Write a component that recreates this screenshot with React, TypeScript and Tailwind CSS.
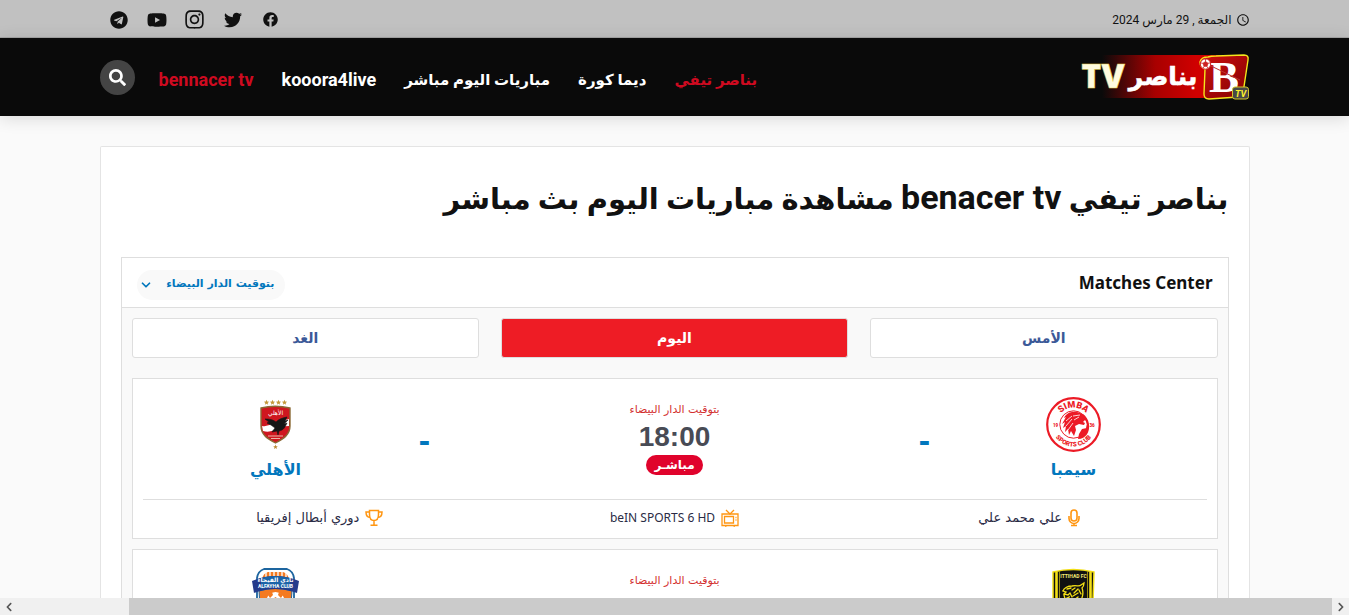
import React from "react";
import { FaFacebook, FaInstagram, FaSearch, FaTelegram, FaTwitter, FaYoutube, FaChevronLeft, FaChevronRight } from "react-icons/fa";
import { MdAccessTime } from "react-icons/md";
import { FiChevronDown } from "react-icons/fi";

const STAR = "M0-5 1.3-1.7 4.8-1.5 2.1.7 3 4.1 0 2.2-3 4.1-2.1.7-4.8-1.5-1.3-1.7Z";

function SiteLogo() {
  return (
    <svg viewBox="0 0 170 50" className="h-[50px] w-[170px]" direction="ltr" role="img" aria-label="بناصر TV">
      <defs>
        <linearGradient id="band" x1="0" x2="1">
          <stop offset="0" stopColor="#0a0a0a" />
          <stop offset="0.45" stopColor="#a80000" />
          <stop offset="0.8" stopColor="#d00000" />
        </linearGradient>
        <linearGradient id="tile" x1="0" x2="1" y1="0" y2="1">
          <stop offset="0" stopColor="#d01010" />
          <stop offset="1" stopColor="#800000" />
        </linearGradient>
      </defs>
      <rect x="22" y="3" width="118" height="43" fill="url(#band)" />
      <text x="23" y="36" textAnchor="middle" fontFamily="'Open Sans', sans-serif" fontWeight="800" fontSize="34" fill="#fffbe0" stroke="#e8d44a" strokeWidth="0.5">TV</text>
      <text x="83" y="33" textAnchor="middle" fontFamily="'DejaVu Sans', sans-serif" fontWeight="700" fontSize="25" fill="#fff" stroke="#fff" strokeWidth="0.6">بناصر</text>
      <path d="M128 5q3-1 8-1l28-1q5 0 4 5l-5 33q-1 4-5 4l-29 2q-5 0-5-5l1-25q-5-2-5-7 1-5 8-5Z" fill="url(#tile)" stroke="#f4e51c" strokeWidth="1.4" />
      <text x="144" y="40" textAnchor="middle" fontFamily="'Liberation Serif', serif" fontWeight="700" fontSize="45" fill="#fff">B</text>
      <path d="m129 13 31 15" stroke="#b33" strokeWidth="1" />
      <circle cx="125.500" cy="12" r="5.200" fill="#fff" stroke="#c22" strokeWidth="1" />
      <path d="m125.500 9.500 2.500 1.800-1 3h-3l-1-3ZM125.500 7v2.500M121 11l2 .3M128 11.300l2.500-.5M124 14.300l-1 2.200M127 14.300l1 2.200" fill="#c22" stroke="#c22" strokeWidth=".8" />
      <rect x="152.500" y="35" width="16" height="12" rx="2.500" fill="#484848" stroke="#d2c52a" strokeWidth="1" />
      <text x="160.500" y="44.500" textAnchor="middle" fontFamily="Roboto, sans-serif" fontStyle="italic" fontWeight="700" fontSize="9" fill="#fff22b">TV</text>
    </svg>
  );
}

function SimbaCrest() {
  return (
    <svg viewBox="0 0 55 55" className="h-[55px] w-[55px]" direction="ltr" aria-hidden="true">
      <defs>
        <path id="simba-top" d="M10.500 27.500a17 17 0 0 1 34 0" />
        <path id="simba-bottom" d="M5.500 27.500a22 22 0 0 0 44 0" />
      </defs>
      <circle cx="27.500" cy="27.500" r="26.300" fill="#fff" stroke="#ec1b26" strokeWidth="2.200" />
      <circle cx="27.500" cy="27.500" r="13.700" fill="#fff" stroke="#ec1b26" strokeWidth="1" />
      <path d="M36 17c-6-4-15-3-18 4l2-1-4 7 3-2-2 6 3-2-1 6 3-3 1 6 2-4 3 5 2-6-1-4 4-2 5 1 1-2-2-1 2-2 2 3v5l-5 1-3 5-1 5c8 0 12-7 11-15-1-5-3-8-6-10Z" fill="#ec1b26" />
      <path d="m20 24 6-5m-6 10 6-7m-4 11 5-7m0-7 7-1m-6 5 5-3" stroke="#fff" strokeWidth=".8" />
      <g fill="#ec1b26" fontFamily="Roboto, sans-serif" fontWeight="900">
        <text fontSize="9" textAnchor="middle"><textPath href="#simba-top" startOffset="50%">SIMBA</textPath></text>
        <text fontSize="6.300" textAnchor="middle"><textPath href="#simba-bottom" startOffset="50%">SPORTS CLUB</textPath></text>
        <text x="9.500" y="29.500" fontSize="4.500" textAnchor="middle">19</text>
        <text x="46" y="29.500" fontSize="4.500" textAnchor="middle">36</text>
      </g>
    </svg>
  );
}

function AhlyCrest() {
  return (
    <svg viewBox="0 0 55 55" className="h-[55px] w-[55px]" direction="ltr" aria-hidden="true">
      {[18.5, 24.5, 30.5, 36.5].map((x) => (
        <path key={x} d={STAR} transform={`translate(${x} 5.500) scale(.55)`} fill="#c4983a" />
      ))}
      <path d="M13 11q14-3.500 29 0v18c0 9-7 13-14.500 17C20 42 13 38 13 29Z" fill="#cf171f" stroke="#8a6a35" strokeWidth="1.400" />
      <path d="M14 29q6 1 11-3l16-4v7q-8 0-13 3-6 4-13 2Z" fill="#fff" />
      <path d="M39 20c-5 1-8 2-11 5-4-3-8-3-11-3l4 3-2 1 4 2 4 3-3 4 5-1 1 4 1-4c5-1 6-4 8-8l-3 1 4-4-3 1Z" fill="#161616" stroke="#161616" strokeWidth=".6" />
      <text x="27.500" y="18" textAnchor="middle" fontFamily="'DejaVu Sans', sans-serif" fontSize="6" fill="#fff">الأهلي</text>
      <path d="M20 39h15M23 41.500h9" stroke="#e9b5a5" strokeWidth="1" />
      <path d={STAR} transform="translate(27.500 50) scale(.5)" fill="#b98b35" />
    </svg>
  );
}

function IttihadCrest() {
  return (
    <svg viewBox="0 0 55 55" className="h-[55px] w-[55px]" direction="ltr" aria-hidden="true">
      <path d="M7 4q20-5 41 0l-1 30q-1 13-20 20Q8 47 7 34Z" fill="#111" stroke="#f3df16" strokeWidth="1.500" />
      <path d="M10.500 4v32M44.500 4v32" stroke="#f3df16" strokeWidth="2.600" />
      <path d="M13.500 3.500v36M41.500 3.500v36" stroke="#f3df16" strokeWidth=".6" />
      <text x="27.500" y="9.500" textAnchor="middle" fontFamily="Roboto, sans-serif" fontWeight="700" fontSize="5" fill="#f5eb75">ITTIHAD FC</text>
      <g fill="none" stroke="#f3df16" strokeWidth="1.300" strokeLinecap="round">
        <path d="M17 23c1-3 5-5 9-5 5-1 7 1 9-1l3-2c0 2-1 4-2 5 2 5 1 9-2 14" />
        <path d="m17 23 3 1-2 2 4 1 2-2M18 27l1 4 4-2-2 5 3 1M21 21l4-1M26 22l3-2M28 25l4-4M27 28l5-3M28 32l4-3M24 25l2 4M31 34l2-2M33 22l2 4M25 32l1 4" />
      </g>
    </svg>
  );
}

function FayhaCrest() {
  return (
    <svg viewBox="0 0 55 55" className="h-[55px] w-[55px]" direction="ltr" aria-hidden="true">
      <path d="M16 1h23q6 2 7 9v25q-2 10-18.500 18Q12 45 9 35V10q1-7 7-9Z" fill="#fff" stroke="#1d659f" strokeWidth="1.800" />
      <path d="M14 12q1-7 6-8h15q5 1 6 8Z" fill="#f47a20" />
      <path d="M18 4v8m4-8v7m4-7v7m4-7v7m4-7v7m4-7v8" stroke="#fff" strokeWidth="1.300" />
      <path d="M11 23q16-5 33 0l-1 14q-5 8-15.500 12Q15 45 12 38Z" fill="#f47a20" stroke="#1d659f" />
      <circle cx="27.500" cy="33" r="9" fill="#fff" />
      <path d="m27.500 29 4 3-2 4.500h-4L23.500 32ZM20 27l4-3 1 3-3 3ZM31 24l4 3-2 3-3-3Z" fill="#f47a20" />
      <path d="M4 13q23-10 47 0l-2 12q-22-8-43 0Z" fill="#243a8b" />
      <path d="M13 10q14-4 29 0v11q-14-4-29 0Z" fill="#1b64a8" />
      <text x="27.500" y="14" textAnchor="middle" fontFamily="'DejaVu Sans', sans-serif" fontWeight="700" fontSize="6" fill="#fff">نادي الفيحاء</text>
      <text x="27.500" y="20" textAnchor="middle" fontFamily="Roboto, sans-serif" fontWeight="700" fontSize="5" fill="#fff">ALFAYHA CLUB</text>
    </svg>
  );
}

const iconProps = { viewBox: "0 0 18 18", className: "h-[18px] w-[18px] shrink-0", fill: "none", stroke: "#ff9612", strokeWidth: 1.3, "aria-hidden": true } as const;

function MicIcon() {
  return (
    <svg {...iconProps} viewBox="0 0 12 18" className="h-[18px] w-3 shrink-0">
      <rect x="3" y="1" width="6" height="11" rx="3" strokeWidth="1.600" />
      <path d="M1 7v2.500a5 5 0 0 0 10 0V7M6 14.500V17M3 16.500h6" strokeWidth="1.600" />
    </svg>
  );
}

function TvIcon() {
  return (
    <svg {...iconProps}>
      <path d="M1 5h16v11.500H1Z" />
      <path d="M3.500 7.500h9v6.500h-9ZM5 1l4 4 4-4M14.500 8.500h1M14.500 11h1M4 17h1.500M12.500 17H14" />
    </svg>
  );
}

function CupIcon() {
  return (
    <svg {...iconProps} strokeWidth={1.5}>
      <path d="M4.500 1.500h9v4c0 4-2 6-4.500 6s-4.500-2-4.500-6ZM4.500 3H1c0 4 1.500 5.500 4.500 5.500M13.500 3H17c0 4-1.500 5.500-4.500 5.500M9 11.500v4M5.500 16.300h7" />
    </svg>
  );
}

type Team = { name: string; Crest: () => React.ReactElement };
type Match = { home: Team; away: Team; time: string; details?: { commentator: string; channel: string; league: string } };

const matches: Match[] = [
  {
    home: { name: "سيمبا", Crest: SimbaCrest },
    away: { name: "الأهلي", Crest: AhlyCrest },
    time: "18:00",
    details: { commentator: "علي محمد علي", channel: "beIN SPORTS 6 HD", league: "دوري أبطال إفريقيا" },
  },
  {
    home: { name: "الاتحاد", Crest: IttihadCrest },
    away: { name: "الفيحاء", Crest: FayhaCrest },
    time: "19:00",
  },
];

function TeamBlock({ team }: { team: Team }) {
  return (
    <div className="flex w-1/4 flex-col items-center pt-[18px]">
      <team.Crest />
      <span className="mt-1 font-['DejaVu_Sans',sans-serif] text-base leading-7 font-bold text-[#0277bd]">{team.name}</span>
    </div>
  );
}

function Score() {
  return <span className="w-8 pt-[43px] text-center font-['Liberation_Sans',sans-serif] text-[34px] leading-9 font-bold text-[#0277bd]">-</span>;
}

function Detail({ icon, children }: { icon: React.ReactNode; children: React.ReactNode }) {
  return (
    <div className="flex flex-1 items-center justify-center gap-1.5 pb-0.5">
      {icon}
      {children}
    </div>
  );
}

function MatchCard({ match }: { match: Match }) {
  return (
    <article className="border border-[#dedede] bg-white px-2.5">
      <div className="flex h-[120px]">
        <TeamBlock team={match.home} />
        <div className="flex flex-1 justify-between">
          <Score />
          <div className="flex flex-col items-center pt-[23px]">
            <span className="font-['DejaVu_Sans',sans-serif] text-[11px] leading-4 text-[#d32f2f]">بتوقيت الدار البيضاء</span>
            <time className="font-['Liberation_Sans',sans-serif] text-[28px] leading-[37px] font-bold text-[#484b55]">{match.time}</time>
            <span className="rounded-full bg-[#e0032c] px-2 font-['DejaVu_Sans',sans-serif] text-xs leading-5 font-bold text-white">مباشـر</span>
          </div>
          <Score />
        </div>
        <TeamBlock team={match.away} />
      </div>
      {match.details && (
        <div className="flex h-[39px] border-t border-[#dedede] text-[#2a2b45]">
          <Detail icon={<MicIcon />}>
            <span className="font-['DejaVu_Sans',sans-serif] text-[13px]">{match.details.commentator}</span>
          </Detail>
          <Detail icon={<TvIcon />}>
            <span className="font-['Noto_Sans',sans-serif] text-xs">{match.details.channel}</span>
          </Detail>
          <Detail icon={<CupIcon />}>
            <span className="font-['DejaVu_Sans',sans-serif] text-[13px]">{match.details.league}</span>
          </Detail>
        </div>
      )}
    </article>
  );
}

const nav = [
  { label: "بناصر تيفي", style: "text-[15px] text-[#cf0a20]" },
  { label: "ديما كورة", style: "text-[15px] text-white" },
  { label: "مباريات اليوم مباشر", style: "text-[15px] text-white" },
  { label: "kooora4live", style: "text-lg text-white" },
  { label: "bennacer tv", style: "text-lg text-[#cf0a20]" },
];

const socials = [
  { label: "Facebook", icon: <FaFacebook className="size-[15px]" /> },
  { label: "Twitter", icon: <FaTwitter className="size-[18px]" /> },
  { label: "Instagram", icon: <FaInstagram className="size-[21px]" /> },
  { label: "YouTube", icon: <FaYoutube className="size-5" /> },
  { label: "Telegram", icon: <FaTelegram className="size-[18px]" /> },
];

const tabs = ["الأمس", "اليوم", "الغد"];

export default function App() {
  const [tab, setTab] = React.useState("اليوم");
  return (
    <div dir="rtl" className="flex h-screen flex-col overflow-hidden bg-[#fafafa] font-['Roboto','DejaVu_Sans',sans-serif] text-[#111]">
      <div className="shrink-0 border-b border-[#a5a5a5] bg-[#c1c1c1]">
        <div className="mx-auto flex h-[37px] max-w-[1150px] items-center justify-between pt-0.5">
          <div className="flex items-center gap-1 text-xs">
            <MdAccessTime className="size-[14px]" />
            <span>الجمعة , 29 مارس 2024</span>
          </div>
          <div className="flex items-center">
            {socials.map((s) => (
              <a key={s.label} href="#" aria-label={s.label} className="flex w-[38px] justify-center">
                {s.icon}
              </a>
            ))}
          </div>
        </div>
      </div>

      <header className="z-10 shrink-0 bg-[#0a0a0a] shadow-[0_2px_16px_rgba(0,0,0,0.14)]">
        <div className="mx-auto flex h-[78px] max-w-[1150px] items-center justify-between">
          <a href="#" className="block"><SiteLogo /></a>
          <div className="flex items-center gap-6">
            <nav className="flex items-center gap-7 pt-1.5 font-bold">
              {nav.map((n) => (
                <a key={n.label} href="#" className={n.style}>{n.label}</a>
              ))}
            </nav>
            <button aria-label="بحث" className="flex size-[35px] items-center justify-center rounded-full bg-[#444] text-white">
              <FaSearch className="size-[17px]" />
            </button>
          </div>
        </div>
      </header>

      <main className="mx-auto mt-[30px] min-h-0 w-full max-w-[1150px] flex-1 overflow-hidden rounded-t-xs border border-b-0 border-[#e4e4e4] bg-white px-5">
        <h1 className="mt-5 mb-[30px] h-[60px] text-[29px] leading-[60px] font-bold whitespace-nowrap">
          بناصر تيفي <span className="text-[34px]">benacer tv</span> مشاهدة مباريات اليوم بث مباشر
        </h1>
        <section className="border border-[#dedede] bg-[#f9f9f9]">
          <div className="flex h-[50px] items-center justify-between border-b border-[#dedede] bg-white px-[15px]">
            <h2 className="font-['Noto_Sans',sans-serif] text-[17px] font-bold">Matches Center</h2>
            <div className="relative mt-1">
              <select aria-label="التوقيت" className="h-[30px] w-[148px] appearance-none rounded-full bg-[#f9f9f9] pr-2.5 font-['DejaVu_Sans',sans-serif] text-[11px] font-bold text-[#0277bd]">
                <option>بتوقيت الدار البيضاء</option>
              </select>
              <FiChevronDown className="pointer-events-none absolute top-2 left-0.5 size-[14px] text-[#0277bd]" strokeWidth={3} />
            </div>
          </div>
          <div className="p-2.5">
            <div className="mb-5 flex gap-[22px]">
              {tabs.map((t) => (
                <button
                  key={t}
                  onClick={() => setTab(t)}
                  className={
                    t === tab
                      ? "h-10 flex-1 rounded-[3px] border border-[#dedede] bg-[#ee1c25] font-['DejaVu_Sans',sans-serif] text-sm font-bold text-white"
                      : "h-10 flex-1 rounded-[3px] border border-[#dedede] bg-white font-['DejaVu_Sans',sans-serif] text-sm font-bold text-[#3b5998]"
                  }
                >
                  {t}
                </button>
              ))}
            </div>
            <div className="flex flex-col gap-2.5">
              {matches.map((m) => (
                <MatchCard key={m.home.name} match={m} />
              ))}
            </div>
          </div>
        </section>
      </main>

      <div dir="ltr" className="z-10 flex h-[17px] shrink-0 bg-[#f0f0f0] text-[#555]">
        <button aria-label="تمرير لليسار" className="flex w-[17px] items-center justify-center"><FaChevronLeft className="size-[10px]" /></button>
        <div className="flex flex-1 justify-end"><div className="w-[91.5%] bg-[#cbcbcb]" /></div>
        <button aria-label="تمرير لليمين" className="flex w-[17px] items-center justify-center"><FaChevronRight className="size-[10px]" /></button>
      </div>
    </div>
  );
}
